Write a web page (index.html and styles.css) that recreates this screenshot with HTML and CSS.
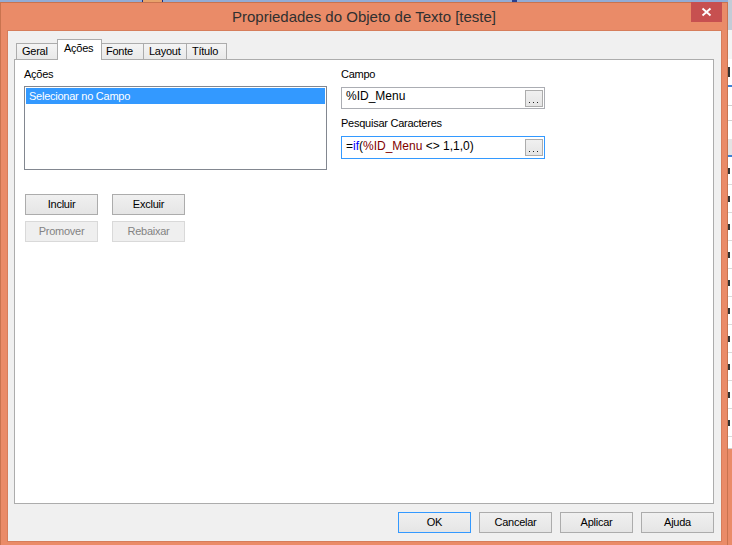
FILE: index.html
```html
<!DOCTYPE html>
<html lang="pt">
<head>
<meta charset="utf-8">
<title>Propriedades do Objeto de Texto [teste]</title>
<link rel="stylesheet" href="styles.css">
</head>
<body>
<div class="desktop">
  <span class="strip-tab"></span>
  <span class="strip-mark"></span>

  <div class="bg-app">
    <div class="ba-head"></div>
    <div class="ba-gap"></div>
    <div class="ba-m"><i></i></div>
    <div class="ba-sp"></div>
    <div class="ba-bar"></div>
    <div class="ba-row"><i></i></div>
    <div class="ba-row"><i></i></div>
    <div class="ba-row"><i></i></div>
    <div class="ba-row"><i></i></div>
    <div class="ba-row"><i></i></div>
    <div class="ba-row"><i></i></div>
    <div class="ba-row"><i></i></div>
    <div class="ba-row"><i></i></div>
    <div class="ba-row"><i></i></div>
    <div class="ba-row"><i></i></div>
    <div class="ba-tail"></div>
    <div class="ba-end"></div>
  </div>

  <div class="window">
    <div class="titlebar">
      <div class="tb-spacer"></div>
      <div class="title">Propriedades do Objeto de Texto [teste]</div>
      <div class="close">
        <svg width="31" height="20" viewBox="0 0 31 20"><path d="M11.5 6.5 L19.5 13.5 M19.5 6.5 L11.5 13.5" stroke="#fff" stroke-width="1.9" fill="none"/></svg>
      </div>
    </div>

    <div class="client">
      <div class="tabs">
        <div class="tab t-geral">Geral</div>
        <div class="tab active t-acoes">Ações</div>
        <div class="tab after t-fonte">Fonte</div>
        <div class="tab t-layout">Layout</div>
        <div class="tab last t-titulo">Título</div>
      </div>

      <div class="panel">
        <div class="col-left">
          <div class="label">Ações</div>
          <div class="listbox">
            <div class="item selected">Selecionar no Campo</div>
          </div>
          <div class="btn-grid">
            <button class="btn">Incluir</button>
            <button class="btn">Excluir</button>
            <button class="btn" disabled>Promover</button>
            <button class="btn" disabled>Rebaixar</button>
          </div>
        </div>

        <div class="col-right">
          <div class="label">Campo</div>
          <div class="textbox">
            <div class="tb-text">%ID_Menu</div>
            <div class="dots"><svg width="18" height="17" viewBox="0 0 18 17"><rect x="4" y="12" width="1" height="1" fill="#222"/><rect x="8" y="12" width="1" height="1" fill="#222"/><rect x="12" y="12" width="1" height="1" fill="#222"/></svg></div>
          </div>
          <div class="label label2">Pesquisar Caracteres</div>
          <div class="textbox focus">
            <div class="tb-text">=<span class="kw">if</span>(<span class="fld">%ID_Menu</span> &lt;&gt; 1,1,0)</div>
            <div class="dots"><svg width="18" height="17" viewBox="0 0 18 17"><rect x="4" y="12" width="1" height="1" fill="#222"/><rect x="8" y="12" width="1" height="1" fill="#222"/><rect x="12" y="12" width="1" height="1" fill="#222"/></svg></div>
          </div>
        </div>
      </div>

      <div class="footer">
        <button class="btn default">OK</button>
        <button class="btn">Cancelar</button>
        <button class="btn">Aplicar</button>
        <button class="btn">Ajuda</button>
      </div>
    </div>
  </div>
</div>
</body>
</html>
```

FILE: styles.css
```css
html, body {
  margin: 0;
  padding: 0;
}

body {
  width: 732px;
  height: 545px;
  overflow: hidden;
  background: #93acd6;
  font-family: "Liberation Sans", Arial, sans-serif;
}

.desktop {
  position: relative;
  width: 732px;
  height: 545px;
}

/* bits of the desktop visible above the window */
.strip-tab {
  position: absolute;
  left: 142px;
  top: 0;
  width: 19px;
  height: 2px;
  background: #e8a26b;
  border-left: 1px solid #1c2a7e;
  border-right: 1px solid #1c2a7e;
}

.strip-mark {
  position: absolute;
  left: 512px;
  top: 0;
  width: 5px;
  height: 2px;
  background: #2a3f8f;
}

/* application window behind the dialog (right edge) */
.bg-app {
  position: absolute;
  left: 728px;
  top: 0;
  width: 4px;
  height: 545px;
  display: flex;
  flex-direction: column;
  background: #fff;
}

.ba-head { height: 30px; background: #c3ccd7; }
.ba-gap { height: 29px; background: #f4f4f4; }
.ba-m {
  height: 26px;
  border-bottom: 2px solid #3b7fd6;
  display: flex;
  align-items: center;
}
.ba-m i { width: 2px; height: 10px; background: #333; }
.ba-sp {
  height: 52px;
  background: linear-gradient(#fff 0 18px, #cfcfcf 18px 19px, #fff 19px 33px, #d0d0d0 33px 34px, #fff 34px);
}
.ba-bar {
  height: 16px;
  background: #e4e4e4;
  border-bottom: 2px solid #3b7fd6;
}
.ba-row {
  height: 27px;
  border-bottom: 1px solid #dadada;
  display: flex;
  align-items: center;
}
.ba-row i { width: 2px; height: 6px; background: #333; }
.ba-tail { height: 11px; border-bottom: 1px solid #cfcfcf; }
.ba-end { flex: 1; background: #ea8b68; }

/* dialog window */
.window {
  position: absolute;
  left: 0;
  top: 2px;
  width: 728px;
  height: 543px;
  box-sizing: border-box;
  border: 1px solid #c9734f;
  border-bottom: 0;
  background: #ea8b68;
  display: flex;
  flex-direction: column;
}

.titlebar {
  height: 28px;
  display: grid;
  grid-template-columns: 1fr auto 1fr;
  align-items: start;
}

.title {
  padding-top: 5px;
  font-size: 15px;
  line-height: 18px;
  color: #303030;
  white-space: nowrap;
}

.close {
  justify-self: end;
  width: 31px;
  height: 20px;
  margin-top: -1px;
  margin-right: 5px;
  background: #c75050;
}

.close svg { display: block; }

.client {
  margin: 0 6px 0 7px;
  width: 713px;
  height: 510px;
  box-sizing: border-box;
  padding: 8px 7px 8px 6px;
  background: #f0f0f0;
  box-shadow: 0 0 0 1px #d67d5b;
  display: flex;
  flex-direction: column;
  font-size: 11px;
  letter-spacing: -0.25px;
  color: #000;
}

/* tabs */
.tabs {
  height: 20px;
  display: flex;
  align-items: flex-end;
  padding-left: 2px;
  position: relative;
  z-index: 1;
}

.tab {
  box-sizing: border-box;
  height: 16px;
  border: 1px solid #acacac;
  border-bottom: 0;
  border-right: 0;
  background: linear-gradient(#f4f4f4, #e9e9e9);
  padding: 1px 0 0 5px;
  line-height: 13px;
  white-space: nowrap;
}

.tab.active {
  height: 21px;
  margin-bottom: -1px;
  border-right: 1px solid #acacac;
  background: #fff;
  padding: 2px 0 0 6px;
}

.tab.after { border-left: 0; }
.tab.last { border-right: 1px solid #acacac; }

.t-geral { width: 41px; }
.t-acoes { width: 45px; }
.t-fonte { width: 41px; padding-left: 4px; }
.t-layout { width: 43px; }
.t-titulo { width: 41px; }

/* tab page */
.panel {
  box-sizing: border-box;
  height: 445px;
  border: 1px solid #acacac;
  background: #fff;
  padding: 8px 9px;
  display: flex;
  align-items: flex-start;
  gap: 14px;
}

.label {
  line-height: 13px;
  white-space: nowrap;
}

.col-left {
  width: 303px;
  display: flex;
  flex-direction: column;
}

.col-left .label { margin-bottom: 5px; }

.listbox {
  box-sizing: border-box;
  height: 84px;
  border: 1px solid #828790;
  padding: 1px 1px 0 1px;
}

.item {
  box-sizing: border-box;
  height: 16px;
  padding: 1px 0 0 3px;
  line-height: 15px;
}

.item.selected {
  background: #3399ff;
  color: #fff;
}

.btn-grid {
  margin: 24px 0 0 1px;
  display: grid;
  grid-template-columns: 73px 73px;
  column-gap: 14px;
  row-gap: 6px;
}

.btn {
  box-sizing: border-box;
  width: 73px;
  height: 21px;
  margin: 0;
  padding: 0;
  border: 1px solid #acacac;
  border-radius: 0;
  background: linear-gradient(#f0f0f0, #e5e5e5);
  font-family: "Liberation Sans", Arial, sans-serif;
  font-size: 11px;
  letter-spacing: -0.25px;
  color: #000;
  line-height: 13px;
}

.btn:disabled {
  border-color: #d9d9d9;
  background: #efefef;
  color: #838383;
}

.btn.default {
  border-color: #3399ff;
}

.col-right {
  width: 204px;
  display: flex;
  flex-direction: column;
}

.col-right .label { margin-bottom: 6px; }
.col-right .label2 { margin-top: 8px; }

.textbox {
  box-sizing: border-box;
  height: 22px;
  border: 1px solid #abadb3;
  display: flex;
  align-items: center;
  padding-right: 1px;
}

.textbox.focus {
  height: 23px;
  border-color: #3399ff;
}

.tb-text {
  flex: 1;
  align-self: flex-start;
  padding: 1px 0 0 4px;
  font-size: 12px;
  line-height: 15px;
  letter-spacing: 0;
  white-space: nowrap;
}

.textbox.focus .tb-text { padding-top: 2px; }

.kw { color: #0000ff; }
.fld { color: #800000; }

.dots {
  box-sizing: border-box;
  width: 18px;
  height: 17px;
  border: 1px solid #acacac;
  background: linear-gradient(#f0f0f0, #e5e5e5);
}

.dots svg {
  display: block;
  margin: -1px;
}

.footer {
  margin-top: 8px;
  display: flex;
  justify-content: flex-end;
  gap: 8px;
}
```
